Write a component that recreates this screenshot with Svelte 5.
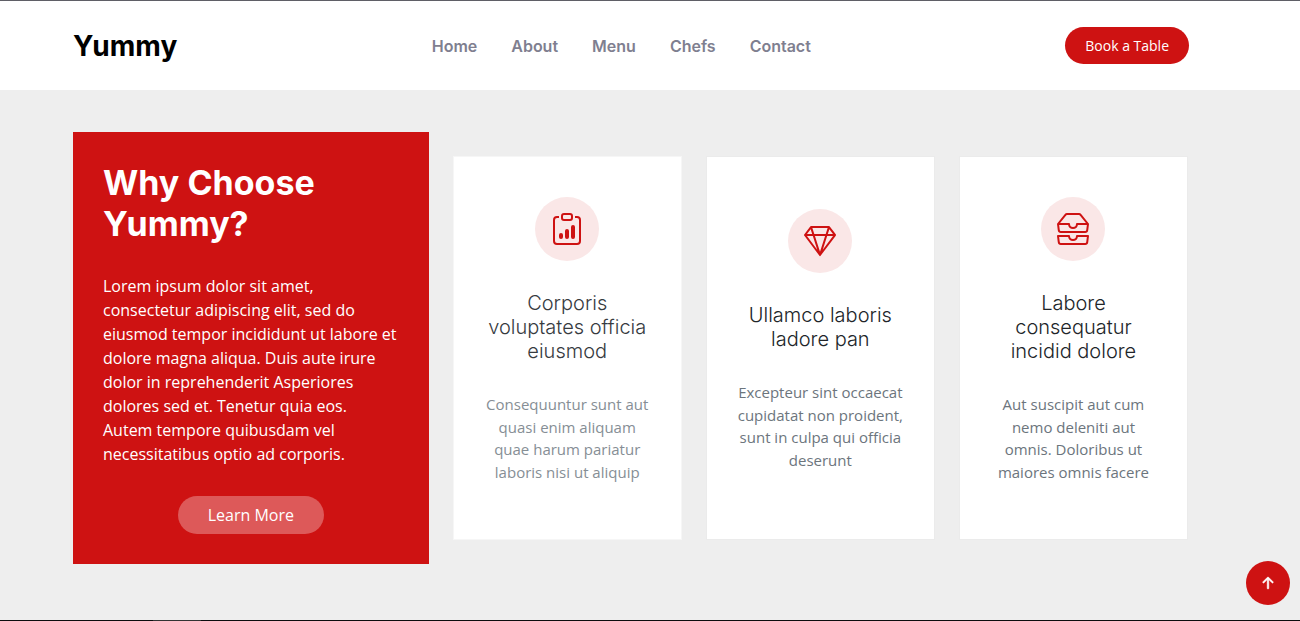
<script>
  const links = ['Home', 'About', 'Menu', 'Chefs', 'Contact'];

  const cards = [
    {
      title: 'Corporis voluptates officia eiusmod',
      text: 'Consequuntur sunt aut quasi enim aliquam quae harum pariatur laboris nisi ut aliquip',
      soft: true,
      paths: [
        'M4 11a1 1 0 1 1 2 0v1a1 1 0 1 1-2 0zm6-4a1 1 0 1 1 2 0v5a1 1 0 1 1-2 0zM7 9a1 1 0 0 1 2 0v3a1 1 0 1 1-2 0z',
        'M4 1.5H3a2 2 0 0 0-2 2V14a2 2 0 0 0 2 2h10a2 2 0 0 0 2-2V3.5a2 2 0 0 0-2-2h-1v1h1a1 1 0 0 1 1 1V14a1 1 0 0 1-1 1H3a1 1 0 0 1-1-1V3.5a1 1 0 0 1 1-1h1z',
        'M9.5 1a.5.5 0 0 1 .5.5v1a.5.5 0 0 1-.5.5h-3a.5.5 0 0 1-.5-.5v-1a.5.5 0 0 1 .5-.5zm-3-1A1.5 1.5 0 0 0 5 1.5v1A1.5 1.5 0 0 0 6.5 4h3A1.5 1.5 0 0 0 11 2.5v-1A1.5 1.5 0 0 0 9.5 0z'
      ]
    },
    {
      title: 'Ullamco laboris ladore pan',
      text: 'Excepteur sint occaecat cupidatat non proident, sunt in culpa qui officia deserunt',
      paths: [
        'M3.1.7a.5.5 0 0 1 .4-.2h9a.5.5 0 0 1 .4.2l2.976 3.974c.149.185.156.45.01.644L8.4 15.3a.5.5 0 0 1-.8 0L.1 5.3a.5.5 0 0 1 0-.6zm11.386 3.785-1.806-2.41-.776 2.413zm-3.633.004.961-2.989H4.186l.963 2.995zM5.47 5.495 8 13.366l2.532-7.876zm-1.371-.999-.78-2.422-1.818 2.425zM1.499 5.5l5.113 6.817-2.192-6.82zm7.889 6.817 5.123-6.83-2.928.002z'
      ]
    },
    {
      title: 'Labore consequatur incidid dolore',
      text: 'Aut suscipit aut cum nemo deleniti aut omnis. Doloribus ut maiores omnis facere',
      paths: [
        'M4.98 1a.5.5 0 0 0-.39.188L1.54 5H6a.5.5 0 0 1 .5.5 1.5 1.5 0 0 0 3 0A.5.5 0 0 1 10 5h4.46l-3.05-3.812A.5.5 0 0 0 11.02 1zm9.954 5H10.45a2.5 2.5 0 0 1-4.9 0H1.066l.32 2.562A.5.5 0 0 0 1.884 9h12.234a.5.5 0 0 0 .496-.438zM3.809.563A1.5 1.5 0 0 1 4.981 0h6.038a1.5 1.5 0 0 1 1.172.563l3.7 4.625a.5.5 0 0 1 .105.374l-.39 3.124A1.5 1.5 0 0 1 14.117 10H1.883A1.5 1.5 0 0 1 .394 8.686l-.39-3.124a.5.5 0 0 1 .106-.374zM.125 11.17A.5.5 0 0 1 .5 11H6a.5.5 0 0 1 .5.5 1.5 1.5 0 0 0 3 0 .5.5 0 0 1 .5-.5h5.5a.5.5 0 0 1 .496.562l-.39 3.124A1.5 1.5 0 0 1 14.117 16H1.883a1.5 1.5 0 0 1-1.489-1.314l-.39-3.124a.5.5 0 0 1 .121-.393zm.941.83.32 2.562a.5.5 0 0 0 .497.438h12.234a.5.5 0 0 0 .496-.438l.32-2.562H10.45a2.5 2.5 0 0 1-4.9 0z'
      ]
    }
  ];
</script>

<div class="page">
  <header>
    <a class="logo" href="#home">Yummy</a>
    <nav aria-label="Main">
      {#each links as link}
        <a href="#{link.toLowerCase()}">{link}</a>
      {/each}
    </nav>
    <a class="book" href="#book">Book a Table</a>
  </header>

  <main>
    <section class="why">
      <h2>Why Choose Yummy?</h2>
      <p>
        Lorem ipsum dolor sit amet, consectetur adipiscing elit, sed do eiusmod tempor incididunt ut
        labore et dolore magna aliqua. Duis aute irure dolor in reprehenderit Asperiores dolores sed
        et. Tenetur quia eos. Autem tempore quibusdam vel necessitatibus optio ad corporis.
      </p>
      <a class="more" href="#about">Learn More</a>
    </section>

    <div class="cards">
      {#each cards as card}
        <article class:soft={card.soft}>
          <div class="icon">
            <svg viewBox="0 0 16 16" width="32" height="32" fill="currentColor" aria-hidden="true">
              {#each card.paths as d}<path {d} />{/each}
            </svg>
          </div>
          <h4>{card.title}</h4>
          <p>{card.text}</p>
        </article>
      {/each}
    </div>
  </main>

  <footer></footer>
</div>

<button class="top" type="button" aria-label="Back to top">
  <svg viewBox="0 0 16 16" width="24" height="24" fill="currentColor" stroke="currentColor" stroke-width="0.4" aria-hidden="true">
    <path d="M8 12a.5.5 0 0 0 .5-.5V5.707l2.146 2.147a.5.5 0 0 0 .708-.708l-3-3a.5.5 0 0 0-.708 0l-3 3a.5.5 0 1 0 .708.708L7.5 5.707V11.5a.5.5 0 0 0 .5.5" />
  </svg>
</button>

<style>
  :global(body) {
    margin: 0;
    background: #eee;
    font-family: 'Open Sans', sans-serif;
    font-size: 16px;
    line-height: 24px;
  }
  .page {
    min-height: 100vh;
    display: flex;
    flex-direction: column;
  }
  .page,
  .page * {
    box-sizing: border-box;
  }
  a {
    text-decoration: none;
  }
  h2,
  h4,
  p {
    margin: 0;
  }
  header {
    display: flex;
    align-items: center;
    justify-content: space-between;
    padding: 26px 111px 26px 73px;
    background: #fff;
    border-top: 1px solid #5f5f66;
  }
  .logo {
    font: 700 28px/36px Inter, sans-serif;
    color: #000;
  }
  nav {
    display: flex;
    gap: 34px;
  }
  nav a {
    font: 600 16px/24px Inter, sans-serif;
    color: #7f7f90;
  }
  .book {
    padding: 8px 20px;
    border-radius: 50px;
    background: #ce1212;
    color: #fff;
    font-size: 14px;
    line-height: 21px;
  }
  main {
    flex: 1;
    display: grid;
    grid-template-columns: 356fr 734fr;
    gap: 25px;
    align-items: center;
    align-content: start;
    padding: 42px 113px 56px 73px;
  }
  .why {
    display: flex;
    flex-direction: column;
    gap: 30px;
    padding: 30px;
    background: #ce1212;
    color: #fff;
  }
  .why h2 {
    font: 700 34px/41px Inter, sans-serif;
  }
  .more {
    align-self: center;
    padding: 7px 30px;
    border-radius: 50px;
    background: rgba(255, 255, 255, 0.3);
    color: #fff;
  }
  .cards {
    display: grid;
    grid-template-columns: repeat(3, 1fr);
    gap: 26px;
  }
  article {
    display: flex;
    flex-direction: column;
    align-items: center;
    justify-content: center;
    gap: 30px;
    padding: 40px 30px 56px;
    background: #fff;
    box-shadow: 0 0 0 1px #ebebeb;
    text-align: center;
  }
  .icon {
    display: flex;
    align-items: center;
    justify-content: center;
    width: 64px;
    height: 64px;
    border-radius: 50%;
    background: #fae7e7;
    color: #ce1212;
  }
  .icon svg {
    display: block;
  }
  h4 {
    font: 300 20px/24px Inter, sans-serif;
    color: #212529;
  }
  article p {
    font-size: 15px;
    line-height: 1.5;
    color: #6c757d;
  }
  .soft {
    box-shadow: 0 0 0 1px #f6f6f6;
  }
  .soft h4 {
    color: #373b3f;
  }
  .soft p {
    color: #868e95;
  }
  footer {
    height: 1px;
    background: linear-gradient(90deg, #0c0c0e 153px, #333 153px 201px, #0c0c0e 201px);
  }
  .top {
    position: fixed;
    right: 10px;
    bottom: 16px;
    display: flex;
    align-items: center;
    justify-content: center;
    width: 44px;
    height: 44px;
    padding: 0;
    border: 0;
    border-radius: 50%;
    background: #ce1212;
    color: #fff;
  }
</style>
